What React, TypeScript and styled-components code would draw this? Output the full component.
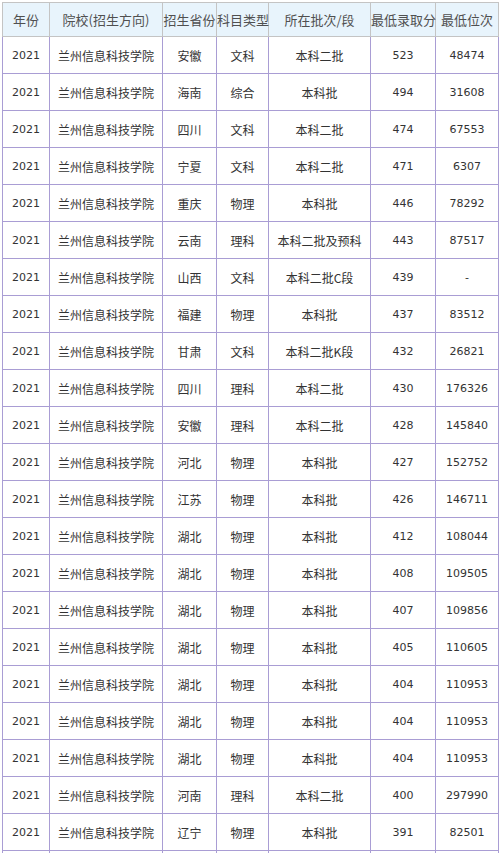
import styled, { createGlobalStyle } from 'styled-components';

const GlobalStyle = createGlobalStyle`
  html, body {
    margin: 0;
    padding: 0;
    background: #ffffff;
  }
`;

type Row = [string, string, string, string, string, string, string];

const school = '兰州信息科技学院';

const rows: Row[] = [
  ['2021', school, '安徽', '文科', '本科二批', '523', '48474'],
  ['2021', school, '海南', '综合', '本科批', '494', '31608'],
  ['2021', school, '四川', '文科', '本科二批', '474', '67553'],
  ['2021', school, '宁夏', '文科', '本科二批', '471', '6307'],
  ['2021', school, '重庆', '物理', '本科批', '446', '78292'],
  ['2021', school, '云南', '理科', '本科二批及预科', '443', '87517'],
  ['2021', school, '山西', '文科', '本科二批C段', '439', '-'],
  ['2021', school, '福建', '物理', '本科批', '437', '83512'],
  ['2021', school, '甘肃', '文科', '本科二批K段', '432', '26821'],
  ['2021', school, '四川', '理科', '本科二批', '430', '176326'],
  ['2021', school, '安徽', '理科', '本科二批', '428', '145840'],
  ['2021', school, '河北', '物理', '本科批', '427', '152752'],
  ['2021', school, '江苏', '物理', '本科批', '426', '146711'],
  ['2021', school, '湖北', '物理', '本科批', '412', '108044'],
  ['2021', school, '湖北', '物理', '本科批', '408', '109505'],
  ['2021', school, '湖北', '物理', '本科批', '407', '109856'],
  ['2021', school, '湖北', '物理', '本科批', '405', '110605'],
  ['2021', school, '湖北', '物理', '本科批', '404', '110953'],
  ['2021', school, '湖北', '物理', '本科批', '404', '110953'],
  ['2021', school, '湖北', '物理', '本科批', '404', '110953'],
  ['2021', school, '河南', '理科', '本科二批', '400', '297990'],
  ['2021', school, '辽宁', '物理', '本科批', '391', '82501'],
  ['2021', school, '湖北', '物理', '本科批', '389', '115362'],
  ['2021', school, '贵州', '物理', '本科批', '385', '90214'],
];

const headers = ['年份', '院校(招生方向)', '招生省份', '科目类型', '所在批次/段', '最低录取分', '最低位次'];
const widths = [47, 113, 54, 52, 102, 65, 63];
// columns that hold only figures
const numCols = [0, 5, 6];

export default function App() {
  return (
    <>
      <GlobalStyle />
      <Page>
        <Table>
          <colgroup>
            {widths.map((w, i) => (
              <col key={i} style={{ width: w }} />
            ))}
          </colgroup>
          <thead>
            <tr>
              {headers.map((h) => (
                <HeadCell key={h}>{h}</HeadCell>
              ))}
            </tr>
          </thead>
          <tbody>
            {rows.map((r, i) => (
              <tr key={i}>
                {r.map((v, j) => (
                  <Cell key={j} $num={numCols.includes(j)}>
                    {v}
                  </Cell>
                ))}
              </tr>
            ))}
          </tbody>
        </Table>
      </Page>
    </>
  );
}

const Page = styled.div`
  padding: 2px 0 0 2px;
  width: 500px;
  box-sizing: border-box;
`;

const Table = styled.table`
  border-collapse: collapse;
  table-layout: fixed;
  width: 496px;
`;

const HeadCell = styled.th`
  height: 33px;
  padding: 0;
  background: #e8f4fc;
  border: 1px solid #c4c4c4;
  color: #505050;
  font-family: "Noto Sans CJK SC", sans-serif;
  font-size: 13px;
  font-weight: 400;
  text-align: center;
  white-space: nowrap;
  overflow: visible;
`;

const Cell = styled.td<{ $num?: boolean }>`
  height: 36px;
  padding: 0;
  border: 1px solid #a99dd4;
  color: #333333;
  font-family: ${(p) => (p.$num ? '"DejaVu Sans", "Noto Sans CJK SC", sans-serif' : '"Noto Sans CJK SC", sans-serif')};
  font-size: ${(p) => (p.$num ? '11px' : '12px')};
  text-align: center;
  white-space: nowrap;
`;
